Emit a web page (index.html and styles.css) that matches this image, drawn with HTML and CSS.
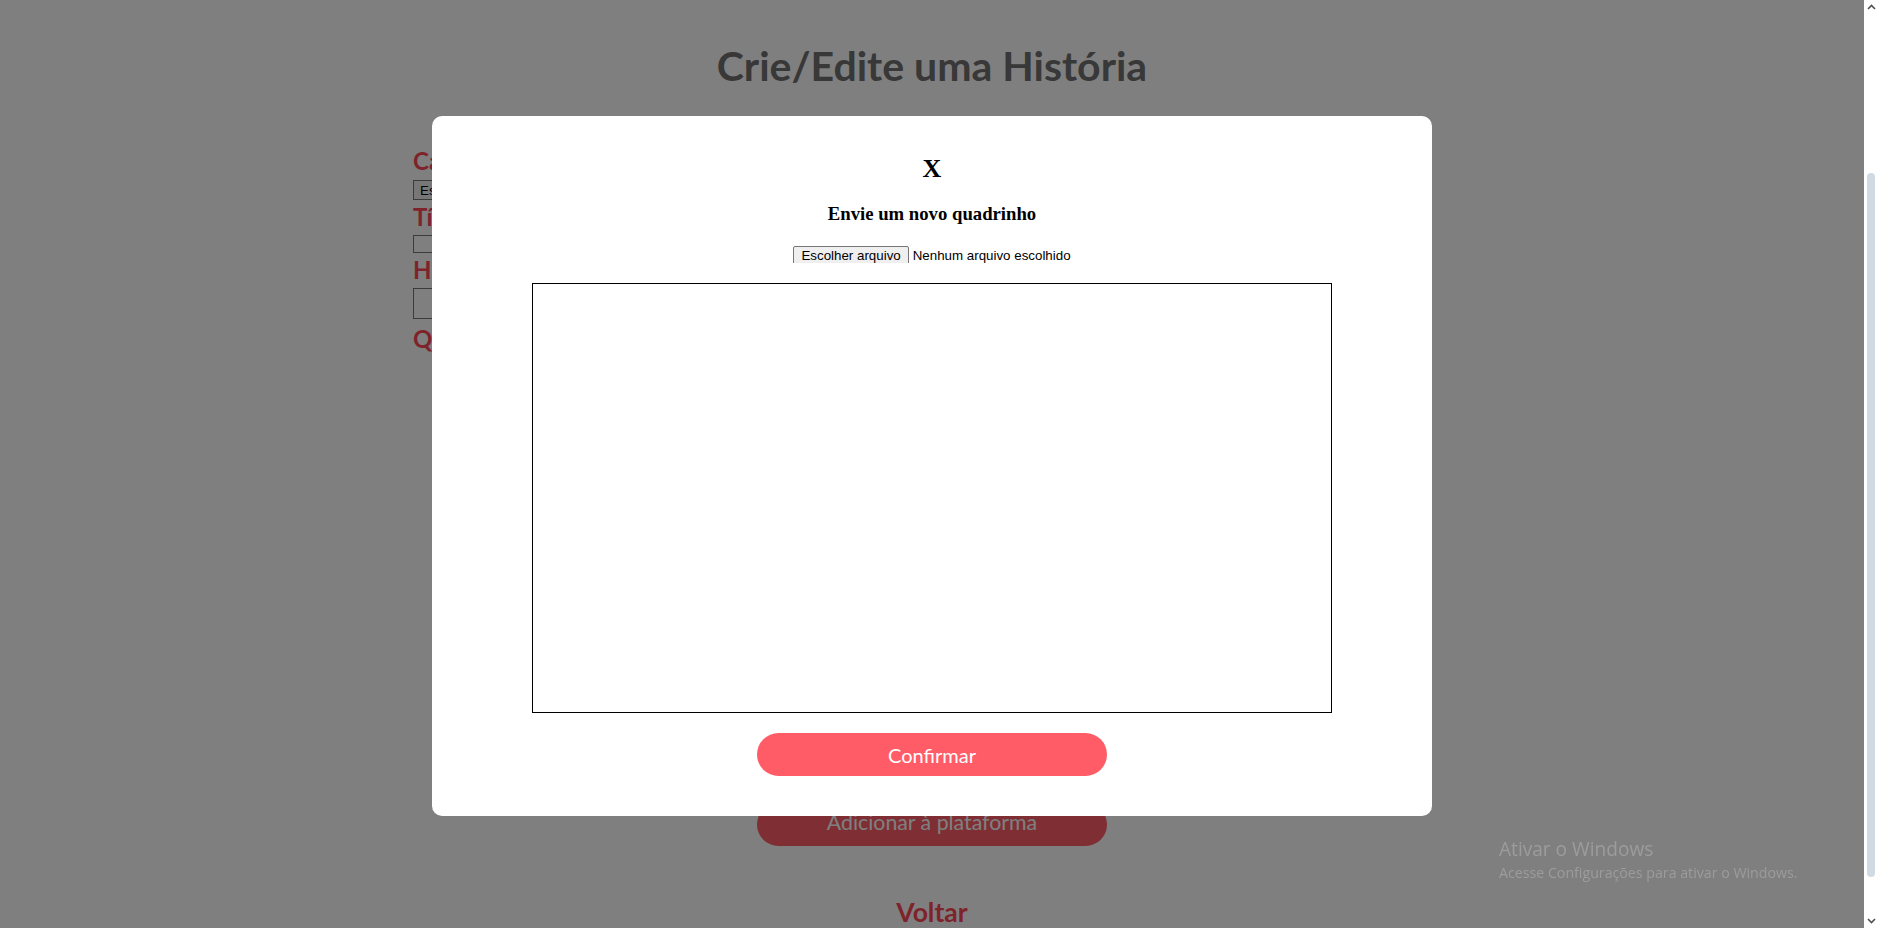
FILE: index.html
```html
<!DOCTYPE html>
<html lang="pt-BR">
<head>
<meta charset="utf-8">
<title>Crie/Edite uma História</title>
<link rel="stylesheet" href="styles.css">
</head>
<body>
<div class="page">
  <main class="editor">
    <h1 class="page-title">Crie/Edite uma História</h1>
    <form class="story-form">
      <label class="field-label">Categoria</label>
      <select class="field-select"><option>Escolha uma categoria</option></select>
      <label class="field-label">Título</label>
      <input class="field-input" type="text">
      <label class="field-label">História</label>
      <textarea class="field-textarea"></textarea>
      <label class="field-label">Quadrinhos</label>
      <div class="panels"></div>
      <button type="button" class="pill-btn add-btn">Adicionar à plataforma</button>
      <a class="back-link">Voltar</a>
    </form>
  </main>
</div>

<div class="overlay">
  <div class="modal">
    <button type="button" class="close-btn">X</button>
    <h3 class="modal-title">Envie um novo quadrinho</h3>
    <label class="file-picker">
      <input type="file" class="file-native">
      <span class="file-btn">Escolher arquivo</span>
      <span class="file-name">Nenhum arquivo escolhido</span>
    </label>
    <div class="preview"></div>
    <button type="button" class="pill-btn confirm-btn">Confirmar</button>
  </div>
</div>

<div class="activation">
  <div class="activation-title">Ativar o Windows</div>
  <div class="activation-text">Acesse Configurações para ativar o Windows.</div>
</div>

<div class="scrollbar">
  <div class="scroll-arrow">
    <svg width="9" height="6" viewBox="0 0 9 6"><path d="M1 5 L4.5 1.5 L8 5" fill="none" stroke="#505050" stroke-width="1.6"/></svg>
  </div>
  <div class="scroll-thumb"></div>
  <div class="scroll-space"></div>
  <div class="scroll-arrow">
    <svg width="9" height="6" viewBox="0 0 9 6"><path d="M1 1 L4.5 4.5 L8 1" fill="none" stroke="#505050" stroke-width="1.6"/></svg>
  </div>
</div>
</body>
</html>
```

FILE: styles.css
```css
html, body {
  margin: 0;
  padding: 0;
  height: 100%;
  overflow: hidden;
}

body {
  background: #ffffff;
  font-family: "Lato", "Open Sans", sans-serif;
}

.page {
  width: calc(100% - 14px);
  height: 100%;
}

.editor {
  display: flex;
  flex-direction: column;
  align-items: center;
  padding-top: 42px;
}

.page-title {
  margin: 0;
  font-size: 41px;
  line-height: 48px;
  font-weight: 700;
  color: #717171;
}

.story-form {
  width: 1038px;
  margin-top: 54px;
  display: flex;
  flex-direction: column;
  align-items: flex-start;
}

.field-label {
  font-size: 24px;
  line-height: 34px;
  font-weight: 700;
  color: #ff4656;
}

.field-select {
  margin-top: 2px;
  height: 20px;
  width: 220px;
  box-sizing: border-box;
  font: 13.33px "Liberation Sans", Arial, sans-serif;
  border: 1px solid #767676;
  background: #efefef;
  padding: 0 2px;
  border-radius: 0;
}

.field-input {
  margin-top: 1px;
  height: 18px;
  width: 240px;
  box-sizing: border-box;
  border: 1px solid #767676;
  padding: 0;
}

.field-textarea {
  display: block;
  margin-top: 1px;
  margin-bottom: 3px;
  height: 31px;
  width: 300px;
  box-sizing: border-box;
  border: 1px solid #767676;
  resize: none;
}

.panels {
  height: 447px;
}

.pill-btn {
  width: 350px;
  height: 43px;
  border: none;
  border-radius: 22px;
  background: #ff5c67;
  color: #ffffff;
  font-family: "Lato", "Open Sans", sans-serif;
  font-size: 20px;
  padding: 0;
}

.add-btn {
  align-self: center;
  font-size: 21.3px;
  padding-bottom: 5px;
}

.back-link {
  align-self: center;
  margin-top: 49px;
  font-size: 26.5px;
  line-height: 34px;
  font-weight: 700;
  color: #ff4656;
}

/* Modal */
.overlay {
  position: fixed;
  top: 0;
  left: 0;
  right: 14px;
  bottom: 0;
  background: rgba(0, 0, 0, 0.5);
  display: flex;
  justify-content: center;
  align-items: flex-start;
  padding-top: 116px;
}

.modal {
  width: 1000px;
  height: 700px;
  box-sizing: border-box;
  background: #ffffff;
  border-radius: 10px;
  padding: 38px 0 40px;
  display: flex;
  flex-direction: column;
  align-items: center;
}

.close-btn {
  border: none;
  background: none;
  padding: 0;
  font-family: "Liberation Serif", "Times New Roman", serif;
  font-weight: 700;
  font-size: 26px;
  line-height: 30px;
  color: #000000;
}

.modal-title {
  margin: 19px 0 0;
  font-family: "Liberation Serif", "Times New Roman", serif;
  font-weight: 700;
  font-size: 18.72px;
  line-height: 22px;
  color: #000000;
}

.file-picker {
  margin-top: 21px;
  height: 17px;
  overflow: hidden;
  display: flex;
  align-items: flex-start;
  gap: 4px;
  font-family: "Liberation Sans", Arial, sans-serif;
  font-size: 13.33px;
  line-height: 15px;
  color: #000000;
}

.file-native {
  display: none;
}

.file-btn {
  border: 1px solid #767676;
  background: #efefef;
  padding: 1px 7px;
  border-radius: 2px;
}

.file-name {
  padding-top: 2px;
}

.preview {
  margin-top: 20px;
  width: 800px;
  height: 430px;
  box-sizing: border-box;
  border: 1px solid #000000;
  background: #ffffff;
}

.confirm-btn {
  margin-top: 20px;
}

/* System watermark */
.activation {
  position: fixed;
  left: 1499px;
  top: 837px;
  font-family: "Open Sans", "Noto Sans", sans-serif;
  color: #9c9c9c;
}

.activation-title {
  font-size: 19.1px;
  line-height: 25px;
}

.activation-text {
  margin-top: 2px;
  font-size: 14.2px;
  line-height: 18px;
}

/* Browser scrollbar */
.scrollbar {
  position: fixed;
  top: 0;
  right: 0;
  bottom: 0;
  width: 14px;
  background: #ffffff;
  display: flex;
  flex-direction: column;
  align-items: center;
}

.scroll-arrow {
  height: 14px;
  display: flex;
  align-items: center;
  justify-content: center;
}

.scroll-thumb {
  margin-top: 159px;
  width: 8px;
  height: 704px;
  border-radius: 4px;
  background: #d0dae2;
}

.scroll-space {
  flex: 1;
}
```
